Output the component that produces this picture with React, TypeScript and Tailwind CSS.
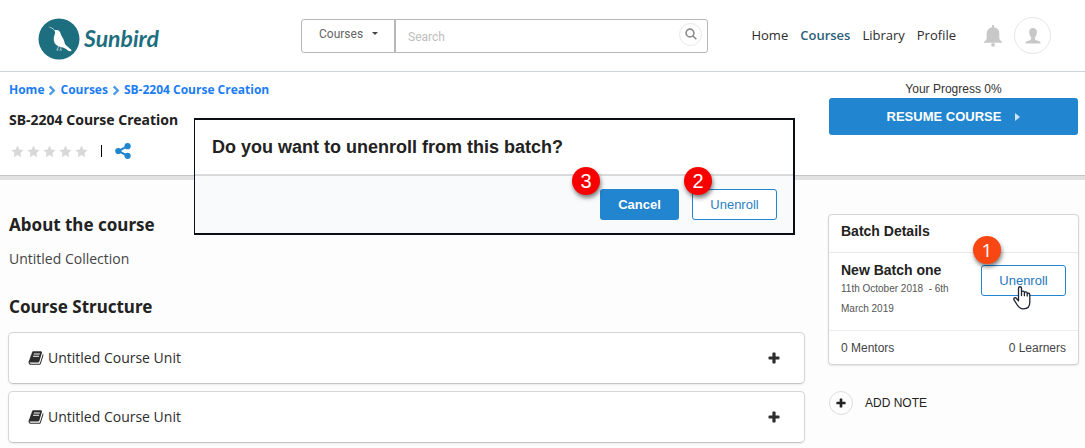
import React from "react";

const LIBERATION = "font-['Liberation_Sans',sans-serif]";

function SunbirdLogo() {
  return (
    <a href="#home" className="flex shrink-0 items-center gap-1 text-[#1d6f80]">
      <svg viewBox="0 0 42 42" className="size-[42px]" aria-hidden="true">
        <circle cx="21" cy="21" r="20.500" fill="#1d6f80" />
        <path
          fill="#fff"
          d="M10 8.800c2.900.1 5.200 1.400 6.700 3.500 1.500-.6 3.600-.3 4.700.9 1.200 1.300 1.200 3.200 2.200 4.800 1.500 2.200 2.500 4.300 3 6.800.2 1 .9 1.800 1.700 2.700l4.900 4.300c.5.6.2 1.300-.7 1.400-1 .1-2-.3-3-1-1.900-1.500-3.900-2.500-6.200-3.100-3.300-.6-5.700-2.200-6.900-4.700-1-2.400-.8-5.200.2-7.600.6-1.500.7-2.700 0-4-1.200-1.800-3.500-3-6.600-4z"
        />
        <path d="m20.500 28-.8 3.200-1.400.7m1.400-.7.2 1.500M23 28.500l-.2 3-1.300.9m1.300-.9.500 1.200" fill="none" stroke="#fff" strokeWidth=".6" />
      </svg>
      <span className="w-[75px] font-['Lato',cursive] text-[23px] leading-none font-bold italic">Sunbird</span>
    </a>
  );
}

function BookIcon() {
  return (
    <svg viewBox="0 0 1664 1792" className="h-4 w-4 shrink-0" fill="currentColor" aria-hidden="true">
      <path d="M1639 478q40 57 18 129l-275 906q-19 64-76.500 107.500T1183 1664H260q-77 0-148.500-53.500T12 1479q-24-67-2-127 0-4 3-27t4-37q1-8-3-21.500t-3-19.500q2-11 8-21t16.500-23.500T52 1179q23-38 45-91.500t30-91.500q3-10 .5-30t-.5-28q3-11 17-28t17-23q21-36 42-92t25-90q1-9-2.500-32t.5-28q4-13 22-30.500t22-22.500q19-26 42.500-84.500T340 411q1-8-3-25.500t-2-26.500q2-8 9-18t18-23 17-21q8-12 16.500-30.500t15-35 16-36 19.500-32 26.500-23.500 36-11.500T556 134l-1 3q38-9 51-9h761q74 0 114 56t18 130l-274 906q-36 119-71.500 153.500T1025 1408H156q-27 0-38 15-11 16-1 43 24 70 144 70h923q29 0 56-15.500t35-41.500l300-987q7-22 5-57 38 15 59 43zm-1064 2q-4 13 2 22.500t20 9.500h608q13 0 25.500-9.500T1247 480l21-64q4-13-2-22.500t-20-9.500H638q-13 0-25.500 9.500T596 416zm-83 256q-4 13 2 22.500t20 9.500h608q13 0 25.500-9.500T1164 736l21-64q4-13-2-22.500t-20-9.500H555q-13 0-25.500 9.500T513 672z" />
    </svg>
  );
}

function PlusIcon({ className }: { className: string }) {
  return (
    <svg viewBox="0 0 12 12" className={className} fill="currentColor" aria-hidden="true">
      <path d="M5.200.5h1.600q.8 0 .8.8v3.100h3.100q.8 0 .8.8v1.600q0 .8-.8.8H7.600v3.100q0 .8-.8.8H5.200q-.8 0-.8-.8V7.600H1.300q-.8 0-.8-.8V5.200q0-.8.8-.8h3.100V1.300q0-.8.8-.8z" />
    </svg>
  );
}

function Chevron() {
  return (
    <svg viewBox="0 0 8 12" className="mx-1 h-[11px] w-2" fill="none" stroke="#4a9aea" strokeWidth="2.500" aria-hidden="true">
      <path d="M1.500 1.500 6 6 1.500 10.500" />
    </svg>
  );
}

function Star() {
  return (
    <svg viewBox="0 0 24 24" className="size-[13px]" fill="#d8d8d8" aria-hidden="true">
      <path d="M12 .8l3.400 7.300 7.900 1-5.800 5.500 1.500 7.900L12 18.600l-7 3.900 1.500-7.900L.7 9.100l7.900-1z" />
    </svg>
  );
}

function Marker({ label, className }: { label: string; className: string }) {
  return (
    <span className={`absolute flex size-7 items-center justify-center rounded-full text-white shadow-[1px_3px_4px_rgba(0,0,0,0.5)] ${className}`}>
      {label}
    </span>
  );
}

function CourseUnit() {
  return (
    <li className="flex h-[52px] items-center rounded-[5px] border border-[#d6d6d6] border-b-[#c4c4c4] bg-white pr-6 pl-[19px] text-[#2d2d2d] shadow-[0_1px_2px_rgba(0,0,0,0.08)]">
      <BookIcon />
      <h3 className="ml-1 flex-1 font-['Open_Sans',sans-serif] text-sm font-medium">Untitled Course Unit</h3>
      <button type="button" aria-label="Expand Untitled Course Unit">
        <PlusIcon className="size-3" />
      </button>
    </li>
  );
}

export default function App() {
  return (
    <div className={`relative min-h-screen bg-[#fdfdfd] text-[#222] ${LIBERATION}`}>
      <header className="flex h-[72px] items-center border-b border-[#c9d5da] bg-white pr-[34px] pl-[38px]">
        <div className="pt-[6px]">
          <SunbirdLogo />
        </div>
        <form className="ml-[142px] flex h-[34px] flex-1 items-center rounded-[3px] border border-[#b8b8b8] font-['Roboto',sans-serif] text-xs">
          <button type="button" className="flex h-full w-[94px] shrink-0 items-center border-r-2 border-[#b8b8b8] pb-1 pl-[17px] text-[#666]">
            Courses
            <svg viewBox="0 0 6 3" className="ml-[9px] h-[3px] w-[6px]" fill="#444" aria-hidden="true">
              <path d="M0 0h6L3 3z" />
            </svg>
          </button>
          <input type="search" aria-label="Search" placeholder="Search" className="h-full min-w-0 flex-1 pt-[2px] pl-3 outline-none placeholder:text-[#bdbdbd]" />
          <button type="button" aria-label="Run search" className="mr-[5px] mb-[3px] flex size-[23px] items-center justify-center rounded-full border border-[#e8e8e8]">
            <svg viewBox="0 0 12 12" className="size-3" fill="none" stroke="#8a8a8a" strokeWidth="1.600" aria-hidden="true">
              <circle cx="5" cy="5" r="3.900" />
              <path d="m8 8 3.300 3.300" />
            </svg>
          </button>
        </form>
        <nav className="ml-[43px] flex items-center gap-3 font-['Open_Sans',sans-serif] text-[13px] text-[#2d2d2d]">
          <a href="#home">Home</a>
          <a href="#courses" className="font-semibold text-[#2a6178]">Courses</a>
          <a href="#library">Library</a>
          <a href="#profile">Profile</a>
        </nav>
        <button type="button" aria-label="Notifications" className="ml-7">
          <svg viewBox="0 0 18 22" className="h-[22px] w-[18px]" fill="#c8c8c8" aria-hidden="true">
            <path d="M8 0h2v2.200c3.500.6 5.300 3 5.300 6.300v4.200c0 1.600.9 2.800 2.700 4v1H0v-1c1.800-1.200 2.700-2.400 2.700-4V8.500c0-3.300 1.800-5.700 5.300-6.300z" />
            <circle cx="9" cy="19.800" r="1.900" />
          </svg>
        </button>
        <button type="button" aria-label="Account" className="ml-3 flex size-[37px] items-center justify-center rounded-full border border-[#e6e6e6]">
          <svg viewBox="0 0 16 16" className="size-4" fill="#c8c8c8" aria-hidden="true">
            <path d="M8 0c2.600 0 3.900 1.700 3.800 4.200 0 2-.7 3.900-1.900 5v1.900c.3 1.200 2 1.600 3.700 2 1.300.4 1.900 1.100 2 2.500H.4c.1-1.400.7-2.100 2-2.500 1.700-.4 3.400-.8 3.700-2V9.200c-1.200-1.100-1.900-3-1.900-5C4.100 1.700 5.400 0 8 0z" />
          </svg>
        </button>
      </header>

      <section className="flex h-[108px] justify-between border-b-4 border-[#e2e2e2] bg-white pr-[7px] pl-[9px] shadow-[inset_0_-1px_0_#c5c5c5]">
        <div className="font-['Noto_Sans',sans-serif]">
          <nav aria-label="Breadcrumb" className="mt-[9px] flex items-center font-['Open_Sans',sans-serif] text-xs leading-[18px] font-bold text-[#1a7df5]">
            <a href="#home">Home</a>
            <Chevron />
            <a href="#courses">Courses</a>
            <Chevron />
            <a href="#course">SB-2204 Course Creation</a>
          </nav>
          <h1 className="mt-3 text-sm leading-[18px] font-bold">SB-2204 Course Creation</h1>
          <div className="mt-[14px] flex items-center">
            <div role="img" aria-label="Rated 0 of 5" className="flex gap-[3px] pl-[2px]">
              <Star />
              <Star />
              <Star />
              <Star />
              <Star />
            </div>
            <span className="ml-[13px] h-3 w-px bg-black" />
            <button type="button" aria-label="Share" className="ml-[13px]">
              <svg viewBox="0 0 16 16" className="size-4" fill="#2185d0" aria-hidden="true">
                <path d="M12.500 3.200 3.500 8l9 4.800" fill="none" stroke="#2185d0" strokeWidth="2" />
                <circle cx="12.600" cy="3.200" r="3.100" />
                <circle cx="3.300" cy="8" r="3.100" />
                <circle cx="12.600" cy="12.800" r="3.100" />
              </svg>
            </button>
          </div>
        </div>
        <div className="w-[249px] text-center">
          <p className="mt-[9px] text-xs leading-[17px] text-[#333]">Your Progress 0%</p>
          <button type="button" className="flex h-[37px] w-full items-center justify-center rounded-[3px] bg-[#2185d0] text-[13px] font-bold text-white">
            RESUME COURSE
            <svg viewBox="0 0 5 8" className="ml-[14px] h-2 w-[5px]" fill="#cfe3f4" aria-hidden="true">
              <path d="M0 0 5 4 0 8z" />
            </svg>
          </button>
        </div>
      </section>

      <main className="flex items-start gap-[23px] pr-[6px] pl-2">
        <div className="flex-1">
          <div className="pl-px font-['Noto_Sans',sans-serif]">
            <h2 className="mt-[33px] text-[17px] leading-6 font-bold">About the course</h2>
            <p className="mt-3 font-['Open_Sans',sans-serif] text-sm leading-5 text-[#444]">Untitled Collection</p>
            <h2 className="mt-[26px] text-[17px] leading-6 font-bold">Course Structure</h2>
          </div>
          <ul className="mt-[13px] space-y-[7px]">
            <CourseUnit />
            <CourseUnit />
          </ul>
        </div>

        <aside className="mt-[34px] w-[251px]">
          <section className="rounded border border-[#d4d4d4] bg-white shadow-[0_1px_2px_rgba(0,0,0,0.1)]">
            <h2 className="h-[38px] border-b border-[#e8e8e8] pt-[7px] pl-3 text-sm leading-[18px] font-bold">Batch Details</h2>
            <div className="flex h-[77px] justify-between pr-3 pl-3">
              <div className="pt-2">
                <h3 className="text-sm leading-[18px] font-bold">New Batch one</h3>
                <p className="w-[120px] text-[10px] leading-5 text-[#555]">11th October 2018 &nbsp;- 6th March 2019</p>
              </div>
              <div className="relative shrink-0 pt-3">
                <button type="button" className="h-[31px] w-[85px] rounded-[3px] border border-[#2185d0] text-[13px] text-[#2477bd]">Unenroll</button>
                <Marker label="1" className="-top-[17px] -left-2 bg-[#f84713] font-['Open_Sans',sans-serif] text-[19px]" />
                <svg viewBox="0 0 18 24" className="absolute top-[33px] left-8 h-6 w-[18px]" fill="#fff" stroke="#1c2433" strokeWidth="1.300" strokeLinejoin="round" aria-hidden="true">
                  <path d="M5.500 14.800V2.300c0-2.100 3-2.100 3 0v7.200-3.200c0-1.700 2.900-1.700 2.900 0v3.400-2.600c0-1.600 2.800-1.600 2.800 0v3-1.800c0-1.400 2.600-1.400 2.600.1v7.800c0 3.900-2.300 6.600-6.300 6.600-3 0-4.800-1.200-6.200-3.800L1 13.800c-.8-1.800 1.200-2.900 2.500-1.300z" />
                </svg>
              </div>
            </div>
            <div className="flex h-[34px] items-center justify-between border-t border-[#ececec] px-3 text-xs text-[#444]">
              <span>0 Mentors</span>
              <span>0 Learners</span>
            </div>
          </section>
          <button type="button" className="mt-[26px] ml-px flex items-center gap-3 text-xs">
            <span className="flex size-6 items-center justify-center rounded-full border border-[#ddd]">
              <PlusIcon className="size-[10px]" />
            </span>
            ADD NOTE
          </button>
        </aside>
      </main>

      <section role="dialog" aria-labelledby="unenroll-title" className="absolute top-[118px] left-[194px] h-[117px] w-[601px] border-2 border-l border-[#0b0e14] bg-[#f9fafc]">
        <div className="h-[56px] border-b-2 border-[#d9dadb] bg-white pt-[15px] pl-[17px]">
          <h2 id="unenroll-title" className="text-lg leading-6 font-bold">Do you want to unenroll from this batch?</h2>
        </div>
        <div className="flex justify-end gap-[13px] pt-[13px] pr-4 text-[13px]">
          <div className="relative">
            <button type="button" className="h-[31px] w-[79px] rounded-[3px] bg-[#2185d0] font-bold text-white">Cancel</button>
            <Marker label="3" className="-top-[22px] -left-7 bg-[#f90000] text-xl" />
          </div>
          <div className="relative">
            <button type="button" className="h-[31px] w-[85px] rounded-[3px] border border-[#2185d0] bg-white text-[#2a80c5]">Unenroll</button>
            <Marker label="2" className="-top-[22px] -left-2 bg-[#f90000] text-xl" />
          </div>
        </div>
      </section>
    </div>
  );
}
